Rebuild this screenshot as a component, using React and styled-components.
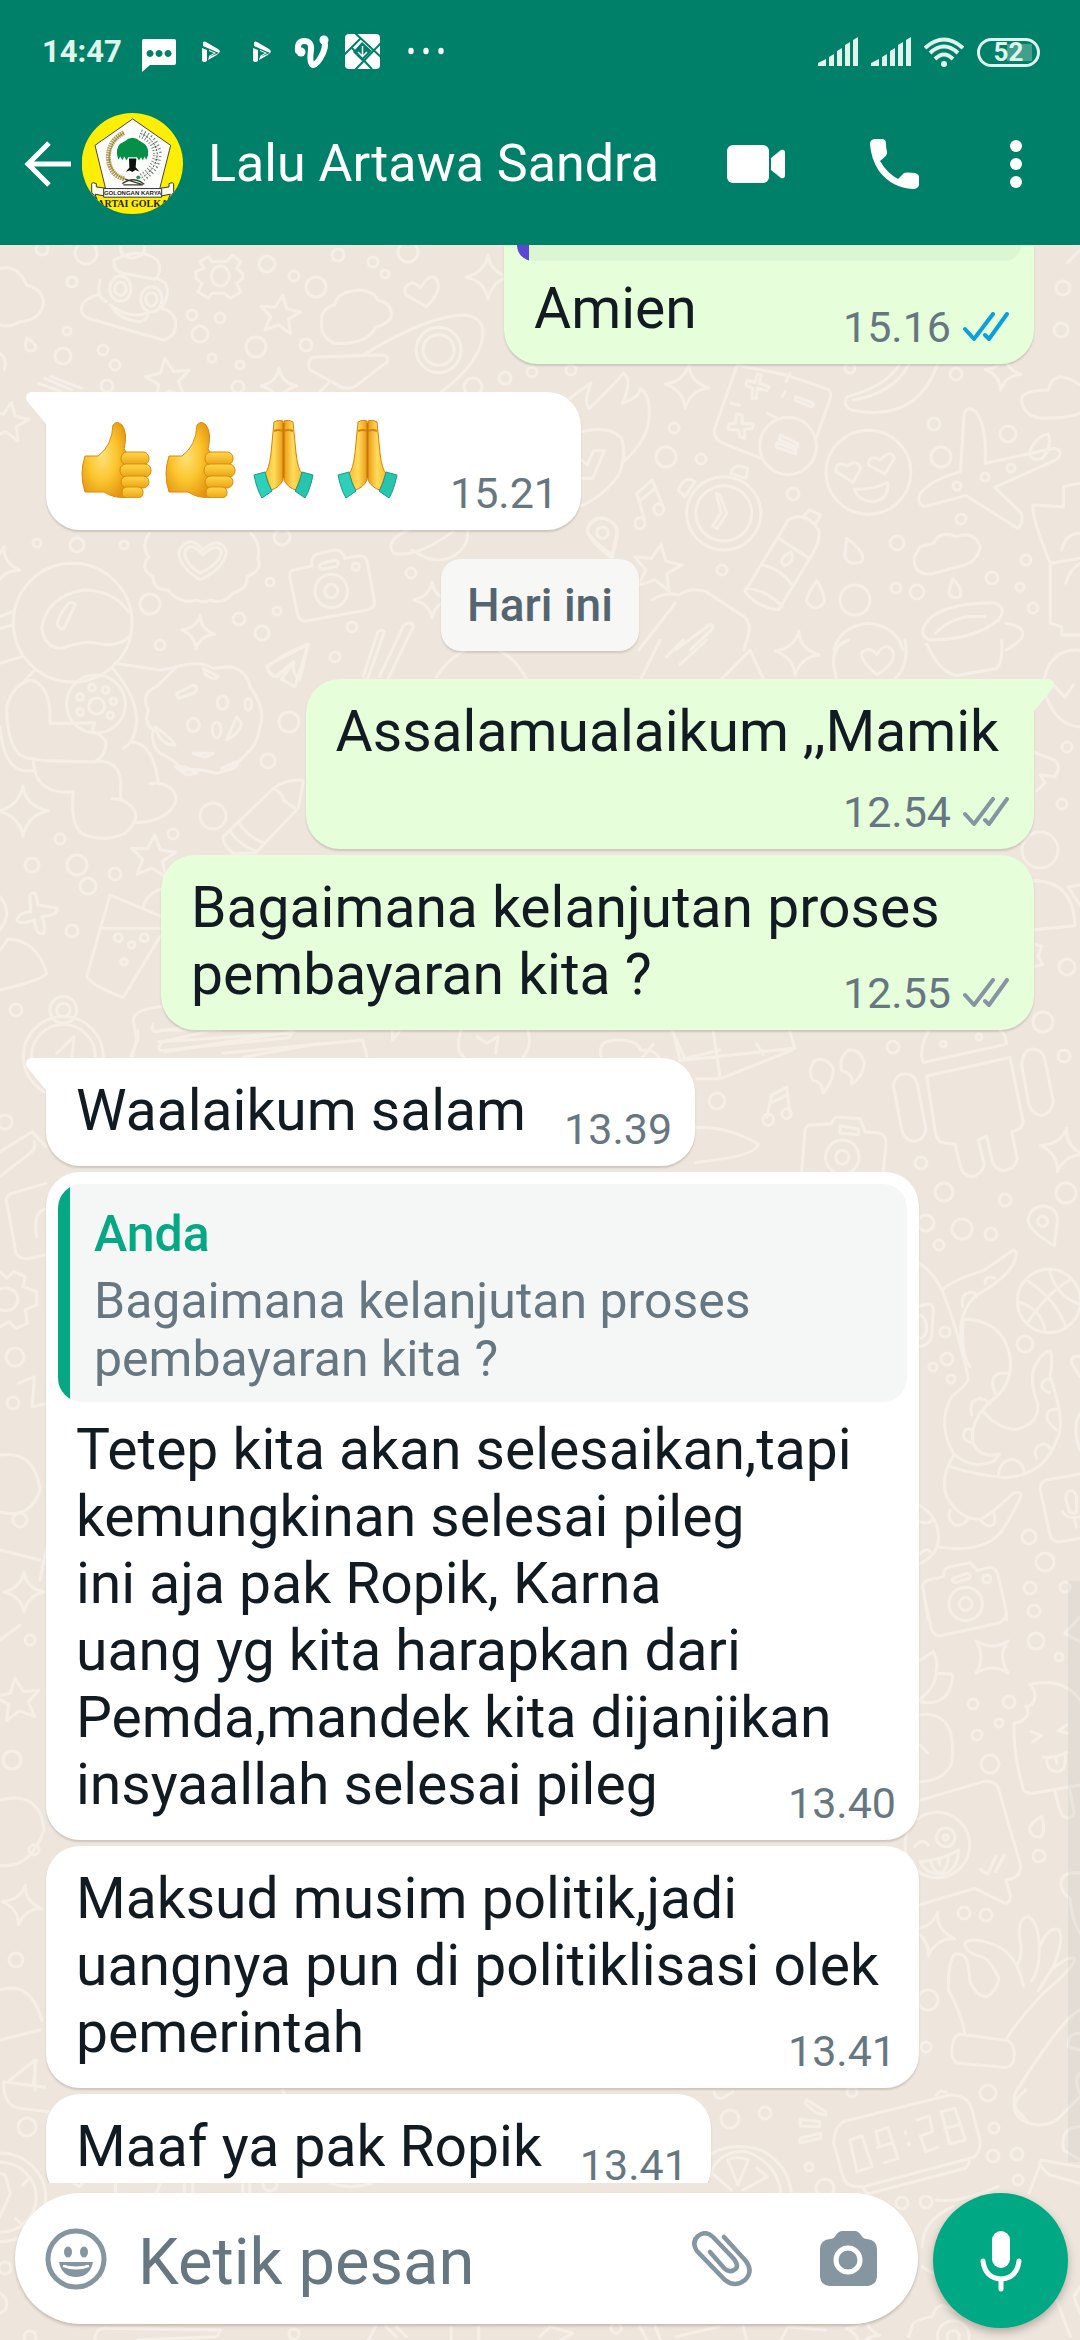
import React from 'react'
import styled, { createGlobalStyle } from 'styled-components'

const GlobalStyle = createGlobalStyle`
  * {
    box-sizing: border-box;
  }
  body {
    margin: 0;
    font-family: Roboto, 'Noto Sans', sans-serif;
    color: #111b21;
  }
  button {
    display: flex;
    padding: 0;
    border: 0;
    background: none;
    color: inherit;
  }
  svg {
    display: block;
    flex: none;
  }
`

const Screen = styled.div`
  position: relative;
  display: flex;
  flex-direction: column;
  height: 100vh;
  overflow: hidden;
  background-color: #eee6dd;
`

const Backdrop = styled.svg`
  position: absolute;
  inset: 0;
  width: 100%;
  height: 100%;
  fill: none;
  stroke: #f6efe8;
  stroke-width: 3;
  stroke-linecap: round;
  stroke-linejoin: round;
  path,
  ellipse {
    vector-effect: non-scaling-stroke;
  }
`

const Header = styled.header`
  position: relative;
  flex: none;
  background-color: #008069;
  color: #fff;
`

const StatusBar = styled.div`
  display: flex;
  align-items: center;
  justify-content: space-between;
  height: 104px;
  padding: 0 40px 0 42px;
  color: #e0f3ec;
`

const StatusGroup = styled.div`
  display: flex;
  align-items: center;
  gap: ${({ gap }) => gap}px;
`

const Clock = styled.time`
  font-size: 31px;
  font-weight: 700;
  line-height: 36px;
`

const Toolbar = styled.div`
  display: flex;
  align-items: center;
  height: 141px;
  padding: 0 52px 22px 24px;
`

const Contact = styled.h1`
  flex: 1;
  margin: 0 0 0 25px;
  font-size: 52px;
  font-weight: 400;
  line-height: 60px;
`

const BackButton = styled.button`
  margin-right: 10px;
`

const Actions = styled.div`
  display: flex;
  align-items: center;
  gap: 85px;
`

const Thread = styled.main`
  position: relative;
  flex: 1;
  min-height: 0;
  display: flex;
  flex-direction: column;
  padding: 0 46px;
  overflow: hidden;
`

const Scrollbar = styled.div`
  position: absolute;
  right: 0;
  bottom: 21px;
  width: 12px;
  height: 30%;
  background-color: rgba(60, 80, 90, 0.06);
`

const Bubble = styled.article`
  position: relative;
  flex: none;
  align-self: ${({ out }) => (out ? 'flex-end' : 'flex-start')};
  width: ${({ wide }) => (wide ? 'calc(100% - 115px)' : 'auto')};
  margin-top: ${({ first }) => (first ? 28 : 6)}px;
  border-radius: 34px;
  background-color: ${({ out }) => (out ? '#e6ffda' : '#fff')};
  box-shadow: 0 2px 2px rgba(40, 30, 20, 0.16);
  ${({ first, out }) =>
    first && (out ? 'border-top-right-radius: 0;' : 'border-top-left-radius: 0;')}
`

const ClippedBubble = styled(Bubble)`
  width: 530px;
  margin-top: 0;
  padding: 0 13px;
  border-radius: 0 0 34px 34px;
`

const QuotedBubble = styled(Bubble)`
  padding-top: 12px;
`

const Tail = styled.svg`
  position: absolute;
  top: 0;
  ${({ $out }) => ($out ? 'left: 100%;' : 'right: 100%;')}
  fill: ${({ $out }) => ($out ? '#e6ffda' : '#fff')};
`

const Body = styled.div`
  display: ${({ mode }) => (mode === 'inline' ? 'flex' : 'block')};
  align-items: flex-end;
  gap: 38px;
  padding: ${({ quoted }) => (quoted ? 14 : 19)}px ${({ out }) => (out ? 25 : 23)}px 12px 30px;
`

const ClippedBody = styled(Body)`
  padding: 14px 12px 12px 17px;
`

const Text = styled.p`
  display: flow-root;
  margin: 0;
  padding-bottom: ${({ mode }) => (mode === 'inline' ? 10 : 0)}px;
  padding-right: ${({ mode }) => (mode === 'below' ? 10 : 0)}px;
  font-size: 57px;
  line-height: 67px;
  white-space: pre-line;
`

const EmojiRow = styled.div`
  display: flex;
  padding: 9px 0 20px;
`

const Meta = styled.span`
  display: flex;
  align-items: center;
  justify-content: flex-end;
  gap: 12px;
  color: #667781;
  font-size: 43px;
  line-height: 50px;
  ${({ mode }) => mode === 'below' && 'margin-top: 22px;'}
  ${({ mode }) => !mode && 'float: right; margin-top: 27px;'}
`

const Quote = styled.blockquote`
  margin: 0 12px;
  padding: 21px 24px 14px 36px;
  border-radius: 24px;
  background: linear-gradient(90deg, #06a884 12px, #f4f7f6 12px);
  color: #667781;
  font-size: 50px;
  line-height: 58px;
`

const QuoteAuthor = styled.strong`
  display: block;
  margin-bottom: 9px;
  color: #06a884;
  font-weight: 500;
`

const QuoteText = styled.p`
  margin: 0;
  white-space: pre-line;
`

const QuoteEnd = styled.div`
  height: 16px;
  border-radius: 0 0 24px 24px;
  background: linear-gradient(90deg, #5b48d2 12px, #dcf5d2 12px);
`

const DateChip = styled.div`
  align-self: center;
  flex: none;
  margin-top: 29px;
  padding: 18px 26px;
  border-radius: 20px;
  background-color: #f7f7f6;
  box-shadow: 0 2px 2px rgba(40, 30, 20, 0.14);
  color: #54656f;
  font-size: 46px;
  font-weight: 500;
  line-height: 56px;
`

const Composer = styled.form`
  position: relative;
  flex: none;
  display: flex;
  gap: 15px;
  padding: 10px 12px 12px 15px;
`

const Field = styled.div`
  flex: 1;
  min-width: 0;
  display: flex;
  align-items: center;
  height: 131px;
  padding: 0 41px 0 30px;
  border-radius: 66px;
  background-color: #fff;
  box-shadow: 0 2px 3px rgba(40, 30, 20, 0.22);
  color: #8696a0;
`

const MessageInput = styled.input`
  flex: 1;
  min-width: 0;
  margin: 6px 0 0 31px;
  padding: 0;
  border: 0;
  outline: 0;
  background: none;
  color: #111b21;
  font: 400 65px/76px Roboto, 'Noto Sans', sans-serif;
  &::placeholder {
    color: #667781;
    opacity: 1;
  }
`

const AttachButton = styled.button`
  margin-right: 68px;
`

const MicButton = styled.button`
  align-items: center;
  justify-content: center;
  width: 135px;
  height: 135px;
  border-radius: 50%;
  background-color: #00a884;
  box-shadow: 0 4px 8px rgba(40, 30, 20, 0.3);
`

/* ---------- wallpaper ---------- */

const RINGS = [
  [72, 282, 5], [42, 249, 6], [86, 253, 11], [267, 264, 8], [294, 276, 5], [316, 287, 10],
  [338, 255, 6], [373, 262, 5], [385, 274, 4], [408, 252, 10], [192, 315, 5], [220, 318, 5],
  [200, 334, 8], [67, 331, 4], [63, 356, 8], [103, 350, 5], [115, 365, 5], [256, 347, 10],
  [306, 345, 6], [212, 358, 4], [240, 365, 4], [107, 386, 6], [238, 387, 6], [505, 378, 6],
  [473, 387, 9], [532, 372, 5], [571, 370, 5], [37, 543, 4], [77, 545, 7], [124, 545, 4],
  [282, 537, 8], [270, 582, 4], [277, 611, 4], [239, 619, 6], [262, 633, 7], [150, 604, 10],
  [160, 645, 5], [352, 627, 5], [335, 657, 5], [411, 573, 5], [674, 428, 5], [666, 457, 10],
  [701, 459, 5], [793, 494, 6], [722, 570, 5], [934, 424, 6], [941, 457, 10], [1008, 434, 8],
  [1011, 468, 4], [985, 477, 4], [957, 486, 4], [961, 519, 5], [897, 543, 7], [1026, 560, 5],
  [992, 578, 6], [896, 588, 5], [1020, 587, 4], [917, 592, 7], [1033, 608, 5], [1063, 288, 7],
  [1061, 330, 7], [850, 368, 5], [956, 374, 6], [855, 600, 15], [1067, 747, 5], [1062, 804, 5],
  [1040, 850, 18], [1067, 967, 8], [1043, 1022, 10], [1064, 1056, 6], [893, 1047, 6],
  [717, 1101, 8], [921, 1163, 6], [944, 1192, 9], [1005, 1200, 6], [1066, 1193, 10],
  [926, 1223, 8], [962, 1229, 10], [991, 1234, 6], [939, 1245, 5], [945, 1332, 5],
  [947, 1359, 6], [933, 1367, 4], [951, 1379, 4], [1025, 1344, 8], [1029, 1537, 7],
  [1045, 1562, 9], [1030, 1588, 6], [1034, 1611, 6], [1065, 1587, 5], [1036, 1641, 8],
  [1059, 1657, 4], [973, 1704, 5], [1009, 1702, 6], [999, 1723, 4], [977, 1735, 5],
  [990, 1764, 9], [1039, 1856, 6], [964, 1913, 6], [986, 1915, 6], [928, 2000, 10],
  [926, 2047, 5], [988, 2093, 8], [289, 722, 10], [268, 761, 7], [213, 816, 13],
  [173, 834, 5], [60, 839, 5], [32, 865, 7], [77, 865, 10], [115, 874, 6], [88, 886, 8],
  [72, 931, 6], [16, 1010, 6], [5, 1122, 7], [15, 1357, 9], [13, 1403, 6], [27, 2127, 9],
  [5, 2268, 6], [294, 2334, 5], [30, 2337, 6], [270, 2184, 7], [730, 2119, 9],
  [765, 2113, 6], [852, 2092, 5], [809, 2167, 4], [825, 2188, 9], [994, 2128, 5],
  [993, 2156, 6], [1017, 2154, 6], [1018, 2180, 5], [902, 2203, 6], [926, 2202, 6],
  [616, 2328, 5], [20, 1520, 7], [30, 1640, 5], [12, 1760, 9], [34, 1850, 5], [16, 1960, 7],
]

const SPARKLES = [
  [488, 277, 22, 0], [279, 386, 18, 0], [198, 632, 17, 8], [0, 566, 20, 12], [432, 600, 18, 0],
  [23, 811, 25, 0], [687, 386, 22, 5], [1003, 372, 18, 8], [797, 653, 22, 5],
  [1062, 1150, 22, 12], [992, 1657, 23, 45], [933, 1934, 22, 12], [863, 2332, 17, 12],
  [24, 1592, 20, 0], [22, 1905, 20, 10],
]

const STARS = [
  [280, 315, 20, 8], [168, 380, 22, -8], [8, 422, 20, 10], [657, 568, 24, 10],
  [153, 857, 22, 5], [18, 1700, 22, -8],
]

function Wallpaper() {
  return (
    <Backdrop viewBox="0 0 1080 2340" preserveAspectRatio="xMidYMin slice" aria-hidden="true">
      {RINGS.map(([x, y, r]) => (
        <ellipse key={`${x}-${y}`} cx={x} cy={y} rx={r} ry={r} />
      ))}
      {SPARKLES.map(([x, y, size, turn]) => (
        <path
          key={`${x}-${y}`}
          transform={`translate(${x} ${y}) rotate(${turn}) scale(${size / 20})`}
          d="M0-20Q2-4 20 0Q4 3 0 20Q-3 4-20 0Q-3-4 0-20Z"
        />
      ))}
      {STARS.map(([x, y, size, turn]) => (
        <path
          key={`${x}-${y}`}
          transform={`translate(${x} ${y}) rotate(${turn}) scale(${size / 20})`}
          d="M0-20 6-7 20-6 9 3 13 17 0 10-13 17-9 3-20-6-6-7Z"
        />
      ))}
      {/* top left: smiling swirl, gear, cloud, fried egg */}
      <g transform="translate(0 240) scale(.408 .3333)">
        <path d="M0 85Q45 75 65 135Q112 150 105 200Q95 240 50 245Q20 265 0 255" />
        <path d="M320 55Q365 50 352 0M320 55Q285 40 300 10M280 60Q275 90 300 100L380 118Q400 90 385 60Q340 20 280 60M245 120Q235 170 260 185L240 165Q195 180 200 215Q205 235 230 240L400 300Q435 290 430 240Q420 210 395 205Q420 160 405 130L385 115M270 195Q320 240 362 218Q365 235 345 245Q290 240 272 195Z" />
        <ellipse cx="295" cy="146" rx="26" ry="38" />
        <ellipse cx="295" cy="146" rx="14" ry="20" />
        <ellipse cx="371" cy="178" rx="26" ry="38" />
        <ellipse cx="371" cy="178" rx="14" ry="20" />
        <path d="M510 50 520 65H555L570 45 590 65 580 85 595 100V115L580 130 590 155 565 175 550 160H520L510 175 485 155 495 130 480 115V95L500 85 490 65Z" />
        <ellipse cx="540" cy="108" rx="22" ry="30" />
        <path d="M1010 128Q985 140 995 165L1045 200Q1080 160 1073 125Q1060 95 1038 130L1030 142Q1020 130 1010 128Z" />
        <path d="M820 195Q825 155 880 150Q920 155 925 180Q965 190 958 235Q935 260 920 262Q900 315 820 310Q785 290 788 250Q785 205 820 195Z" />
        <path d="M890 345Q1050 225 1140 225Q1190 235 1183 290Q1175 370 1080 458M765 352 930 345Q955 345 950 365L870 440Q850 450 835 440L760 390Q750 370 765 352ZM785 455 805 430" />
        <ellipse cx="1075" cy="330" rx="55" ry="68" />
        <ellipse cx="1075" cy="330" rx="38" ry="46" />
        <path d="M0 340Q20 360 10 390M65 293Q95 315 85 330Q65 340 62 318ZM95 430 150 455M110 415 175 450M125 410 200 445" />
        <path d="M365 880Q345 925 365 950Q340 985 375 1010Q375 1050 412 1050Q440 1095 480 1080Q500 1090 515 1080Q550 1095 570 1060Q610 1045 605 1010Q645 990 632 955Q640 910 615 880" />
        <path d="M490 1020Q430 970 440 930Q465 880 498 930Q540 885 555 935Q550 985 490 1020ZM490 1000Q445 960 455 930Q470 905 498 945Q530 905 543 935Q540 970 490 1000Z" />
        <path d="M720 990 765 978Q760 945 785 940L820 930Q840 930 845 955L880 948Q895 945 900 965L918 1085Q918 1105 900 1110L750 1143Q735 1145 730 1125L710 1010Q710 992 720 990ZM790 970 820 960Q835 965 825 980L790 988Q775 980 790 970Z" />
        <ellipse cx="812" cy="1053" rx="40" ry="50" />
        <ellipse cx="812" cy="1053" rx="16" ry="20" />
        <ellipse cx="872" cy="980" rx="9" ry="11" />
        <path d="M1000 870Q940 905 965 940Q1020 955 1110 875M1010 930Q1080 990 1130 930Q1150 905 1145 870M1500 945Q1440 890 1440 870Q1450 830 1480 835Q1520 850 1510 890Z" />
        <path d="M755 1212Q665 1260 655 1285Q660 1310 680 1310L720 1270Q715 1300 735 1318M755 1212 735 1318M890 1310 925 1180Q930 1165 942 1175L900 1320M930 1310 990 1155Q1010 1140 1013 1160L950 1320M1070 1310Q1120 1220 1190 1215Q1260 1240 1290 1318" />
      </g>
      {/* top right: flame, calculator, clock, face, plane */}
      <g transform="translate(480 230) scale(.3827 .3333)">
        <path d="M235 505 290 458Q270 520 285 535Q320 500 375 430Q400 450 372 520Q420 500 418 475Q450 500 440 580Q430 640 375 695M265 605Q340 585 370 625Q385 680 360 740Q320 800 265 828M265 690 280 705 297 662H325L295 745H265" />
        <path d="M672 405 612 600Q612 630 635 640L735 685M800 435 910 478Q920 490 915 505L880 620M672 405 800 435M800 455 810 430M790 500 797 485M752 550 775 565M656 520 678 525" />
        <path d="M735 435 730 460 755 470 750 482 725 475 722 505H710L712 475 695 465 698 450 718 458 725 432ZM685 555 685 580 715 582 712 595 690 598 692 625 680 622 675 600 648 598 650 582 668 580 670 552ZM825 500 868 518Q875 528 865 530L825 512ZM785 615 830 640V652L782 630ZM775 638 825 660V672L775 652Z" />
        <ellipse cx="805" cy="648" rx="74" ry="86" />
        <path d="M1095 405Q1060 470 960 500Q945 525 970 540Q1140 580 1195 405M1120 405Q1080 490 975 510M1568 465Q1500 410 1485 480Q1415 480 1415 510Q1420 560 1470 565Q1530 565 1568 550M1568 60 1535 98" />
        <ellipse cx="637" cy="850" rx="97" ry="110" />
        <ellipse cx="637" cy="850" rx="73" ry="83" />
        <path d="M617 790 627 795 645 850 620 895 608 888 630 848ZM655 730Q665 695 700 715L695 745ZM562 755Q535 735 518 780L535 800ZM410 790 450 750 480 835M410 790 430 870M415 815 458 775" />
        <ellipse cx="467" cy="838" rx="13" ry="17" />
        <ellipse cx="418" cy="880" rx="13" ry="17" />
        <ellipse cx="1015" cy="727" rx="111" ry="126" />
        <path d="M975 757 930 725Q930 690 960 708Q985 685 995 715ZM1058 732 1015 705Q1015 672 1045 690Q1075 655 1083 685ZM978 778Q1030 780 1065 757Q1070 805 1030 815Q990 815 978 778Z" />
        <path d="M1255 725 1265 550Q1275 525 1295 545Q1325 590 1320 700L1500 655Q1530 665 1505 690L1345 772 1415 850Q1420 880 1405 895L1270 797 1160 830Q1140 820 1150 790Q1180 750 1255 725ZM1435 670Q1450 620 1485 612Q1495 650 1470 685Q1440 695 1435 670Z" />
        <path d="M845 860 860 840 890 855 875 885M805 870Q850 840 885 900Q890 930 870 970L780 1140Q720 1130 692 1085L790 900ZM780 925 860 985M740 1005Q790 1020 815 1065M695 1075Q750 1080 790 1130M812 965Q825 995 795 1008Q775 990 812 965ZM958 925Q1010 970 998 995Q965 1010 953 980ZM880 1052Q905 1100 898 1120Q875 1150 853 1115Q855 1090 880 1052ZM1235 1047Q1262 1075 1255 1100Q1230 1110 1225 1085Z" />
        <path d="M1150 950 1185 940Q1200 900 1245 920Q1290 900 1307 950Q1300 1000 1250 1010L1180 1032Q1130 1035 1135 980ZM1568 760 1525 770V830L1445 825Q1440 860 1490 1000V1180L1520 1190V1215H1568M1490 1000 1568 985M1520 960Q1530 910 1568 910M1530 1060Q1540 1020 1568 1000" />
        <ellipse cx="320" cy="908" rx="15" ry="17" />
        <path d="M345 985Q280 925 280 900Q290 860 325 865Q365 880 358 920ZM450 1110Q480 1085 520 1095Q550 1070 590 1085L690 1160Q710 1180 700 1220L690 1260M415 1260 510 1120M595 1185Q615 1180 605 1200L550 1260M510 1260 600 1185M925 1260Q940 1190 1015 1180Q1090 1190 1105 1260M1165 1180Q1200 1120 1340 1118Q1380 1130 1355 1170Q1290 1230 1175 1230Q1145 1215 1165 1180ZM1190 1210Q1240 1150 1320 1160M1375 1180Q1430 1190 1415 1225Q1400 1245 1375 1260" />
      </g>
      {/* left: astronaut, cookie, crayon, compass */}
      <g transform="translate(0 560) scale(.3333)">
        <ellipse cx="218" cy="188" rx="178" ry="178" />
        <path d="M385 155Q340 90 250 90Q140 110 125 205Q135 265 185 265Q240 245 280 248Q350 265 385 232M225 135 195 200Q185 215 172 195Q170 175 205 130Q225 125 225 135ZM38 155 0 170M38 195 0 205M65 290 0 310M105 330 75 360M345 310 480 330 530 322M335 322Q420 420 408 500Q400 550 370 565M150 490Q155 380 95 360Q40 370 20 440Q20 540 55 580Q75 600 150 602L285 606Q320 585 318 545Q300 520 275 515L285 488 215 490 150 490M0 500Q10 620 70 632H100M100 605Q105 690 190 697L220 695Q210 790 245 820Q310 850 375 820Q430 770 390 735Q370 715 335 716M285 603Q355 600 362 660V715M395 545Q460 550 475 670Q530 680 528 725Q500 785 410 788M450 672 475 668" />
        <ellipse cx="288" cy="432" rx="88" ry="87" />
        <ellipse cx="290" cy="438" rx="24" ry="24" />
        <ellipse cx="276" cy="383" rx="10" ry="10" />
        <ellipse cx="317" cy="390" rx="10" ry="10" />
        <ellipse cx="340" cy="424" rx="10" ry="10" />
        <ellipse cx="331" cy="466" rx="10" ry="10" />
        <ellipse cx="240" cy="456" rx="10" ry="10" />
        <ellipse cx="240" cy="411" rx="10" ry="10" />
        <path d="M530 320Q600 300 640 325L690 320Q740 330 750 380Q800 450 780 500Q770 560 740 580Q700 630 650 640Q600 625 550 630Q510 590 480 580Q450 550 460 510Q430 490 445 450Q420 400 470 380ZM530 400 580 375Q600 385 580 400L535 415ZM610 325 655 350Q640 365 615 340ZM465 500Q520 540 525 555Q480 555 465 500ZM680 540Q720 520 725 490L710 470ZM580 580H640L615 592ZM555 620 590 640 560 645 525 620ZM665 625 710 605Q720 620 680 632Z" />
        <ellipse cx="668" cy="428" rx="16" ry="20" />
        <ellipse cx="580" cy="495" rx="18" ry="20" />
        <ellipse cx="650" cy="510" rx="13" ry="24" />
        <ellipse cx="745" cy="433" rx="10" ry="18" />
        <path d="M925 253Q810 310 800 320Q815 350 830 348L880 305 845 358 885 380ZM905 660Q850 660 820 685L670 830Q665 850 700 880H765L895 745 910 665ZM820 685Q850 700 850 720L885 745M715 785Q740 830 795 850M690 812Q710 850 770 875" />
        <path d="M90 1005Q110 985 113 1035Q150 1040 172 1045Q175 1065 125 1070Q140 1100 130 1120Q110 1130 103 1080Q60 1095 50 1080Q60 1055 92 1055ZM330 1005 260 1250Q280 1280 370 1312L480 1130M330 1005 480 1068M300 1105H480M430 1040Q440 1000 490 985M0 1170 25 1137Q110 1140 140 1240Q130 1260 0 1290M0 1010Q40 1060 0 1110" />
        <ellipse cx="355" cy="1133" rx="12" ry="12" />
        <ellipse cx="433" cy="1133" rx="12" ry="12" />
        <ellipse cx="395" cy="1155" rx="10" ry="10" />
        <ellipse cx="372" cy="1206" rx="10" ry="10" />
        <ellipse cx="190" cy="1490" rx="120" ry="120" />
        <ellipse cx="190" cy="1490" rx="96" ry="96" />
        <ellipse cx="190" cy="1350" rx="40" ry="40" />
        <ellipse cx="190" cy="1350" rx="20" ry="20" />
        <path d="M170 1480 222 1430 215 1500M480 1340Q400 1350 400 1380L410 1440 395 1495M460 1392Q450 1415 470 1415L560 1400M480 1340 560 1340M870 1415Q880 1435 850 1435L480 1472Q470 1460 490 1445L620 1415M730 1492 960 1450" />
      </g>
      {/* right edge: mug, robot, note */}
      <g transform="translate(640 640) scale(.3333 .4082)">
        <path d="M0 100 60 0M80 40 130 0M120 60 200 0M245 95 330 25 370 95M590 95Q560 20 625 0M765 95Q810 60 795 0M710 85Q660 50 665 30Q690 15 710 35Q740 0 760 30Q765 60 710 85ZM860 10Q900 80 950 87L1070 70Q1090 50 1085 0M1320 25Q1220 20 1210 115Q1240 210 1320 213M1240 110 1275 140 1300 110M1182 275 1245 295Q1265 310 1245 335L1200 330 1215 350 1190 370M1182 590Q1300 590 1305 700L1182 710M1320 600 1285 605 1320 650M1182 745 1205 750 1195 775 1208 795 1182 800" />
        <path d="M100 960 120 1030 465 1000 450 960M220 960 240 1070M350 990 370 1015M0 1030 40 990M170 1075 240 1075 455 1005M550 1110Q580 1080 580 1050Q560 1020 525 1030Q500 1055 520 1080Q545 1080 550 1110ZM635 1088Q670 1070 673 1035Q660 1000 625 1005Q595 1025 605 1055Q640 1060 635 1088ZM380 1170 395 1115 440 1095 450 1160M390 1135 440 1115" />
        <ellipse cx="385" cy="1175" rx="16" ry="14" />
        <ellipse cx="440" cy="1160" rx="14" ry="12" />
        <path d="M845 1020 850 1035 1100 990Q1095 960 1080 958M845 1020Q845 985 865 960M760 1090Q770 1060 800 1063Q830 1065 835 1100L858 1200Q850 1225 825 1228Q795 1228 785 1200ZM1145 1040Q1150 1000 1180 1002Q1210 1005 1215 1030L1240 1130Q1235 1160 1205 1165Q1170 1160 1165 1130ZM860 1068 1110 1023 1150 1180Q1145 1200 1115 1205L1132 1270Q1125 1298 1090 1300Q1060 1295 1055 1270L1040 1215 1015 1225 1033 1285Q1025 1310 995 1315Q965 1310 960 1285L945 1235 910 1232Q890 1230 885 1200Z" />
        <path d="M485 1300 495 1200Q500 1185 520 1188L575 1185Q580 1165 600 1170L660 1172 675 1205 720 1208Q740 1215 738 1235L730 1300M165 1195Q260 1190 355 1235Q350 1265 165 1280M600 1190 655 1198V1212L600 1208Z" />
        <ellipse cx="607" cy="1267" rx="50" ry="42" />
        <ellipse cx="607" cy="1267" rx="20" ry="17" />
        <ellipse cx="910" cy="990" rx="9" ry="7" />
        <ellipse cx="1017" cy="972" rx="9" ry="7" />
      </g>
      {/* right: pin, ball, octopus arms, camera */}
      <g transform="translate(880 1100) scale(.3333)">
        <path d="M523 437Q440 390 445 355Q455 318 490 318Q535 325 532 365Z" />
        <ellipse cx="488" cy="364" rx="15" ry="15" />
        <ellipse cx="507" cy="603" rx="95" ry="95" />
        <path d="M440 540Q530 600 557 680M415 605Q490 630 495 695M510 515Q530 590 598 612M570 540Q500 580 445 665" />
        <path d="M117 490Q165 520 190 580Q240 710 265 835Q265 850 215 890Q170 970 220 1060Q270 1110 340 1085L358 1063Q300 1075 280 1030Q265 970 330 905Q400 860 390 770Q370 660 250 657Q240 760 270 800M190 567Q220 540 310 512L400 450Q420 455 395 500Q370 540 290 585Q230 640 245 730M310 935Q360 990 410 988Q480 970 473 910Q450 850 460 810Q480 760 510 752Q520 770 510 830Q560 970 530 1020Q490 1130 370 1133Q290 1125 210 1100M220 1068Q180 1130 200 1190Q240 1260 300 1258Q330 1245 400 1180Q430 1170 420 1195Q380 1280 350 1310Q290 1360 170 1340M117 1215Q180 1250 175 1320Q170 1370 117 1392M117 1265Q150 1275 155 1260M117 1365Q140 1340 150 1355M117 620Q160 600 160 630L155 710Q150 735 117 740M117 645Q140 650 140 690 135 715 117 715" />
        <path d="M248 620Q240 580 275 577 290 580 290 590M315 550Q315 525 345 535M345 880Q325 830 360 820L385 820M275 945Q265 900 300 895 320 900 330 912M275 1028Q240 1020 255 990 265 985 275 990M355 1125Q360 1080 400 1078 430 1090 433 1115M470 1075Q455 1040 490 1032 505 1035 510 1045M530 990Q490 960 505 935 520 925 535 928M508 878Q475 865 490 845 500 835 510 838M210 1230Q200 1260 225 1275 250 1280 265 1255M300 1258Q320 1285 340 1275 350 1260 340 1235" />
        <path d="M600 770Q570 765 575 790L600 830M600 940Q575 980 600 1050M600 1122 500 1140Q475 1150 482 1175L510 1305Q520 1330 545 1325L600 1315M572 1172Q555 1175 558 1200L568 1235Q580 1245 590 1235V1190Q585 1172 572 1172ZM547 1235Q560 1260 600 1250M582 1255 590 1282" />
        <path d="M145 1560 128 1460Q128 1445 145 1440L190 1430Q190 1405 205 1402L270 1388 292 1412 330 1402Q350 1405 355 1430L378 1530 380 1560M220 1435 262 1420Q275 1425 268 1435L225 1448Q212 1442 220 1435Z" />
        <ellipse cx="257" cy="1512" rx="50" ry="50" />
        <ellipse cx="257" cy="1512" rx="19" ry="19" />
        <ellipse cx="320" cy="1437" rx="12" ry="12" />
      </g>
      {/* right: popsicle, chat card, hand */}
      <g transform="translate(880 1600) scale(.3333)">
        <path d="M135 0 155 90Q165 108 180 107L355 70Q378 60 378 40M117 183 160 155Q175 180 168 220L215 222Q225 235 200 285Q165 320 117 303M168 222Q165 265 117 300M117 345Q160 335 195 365Q225 400 215 490Q190 545 117 545M120 435 142 458" />
        <path d="M450 253Q550 230 600 300M450 253Q475 285 460 305Q455 320 438 318Q450 340 435 355Q420 370 402 368Q400 430 415 510L430 570Q442 582 460 580L600 555M525 575Q540 640 550 650Q575 660 583 640L570 570M453 395 485 407 458 425M560 375 535 393 562 400M490 472Q530 475 560 457M500 473Q500 515 535 515 560 510 555 465M528 472 530 490M555 100 600 50M555 100 600 125" />
        <path d="M117 602 310 545Q345 540 355 565L423 800Q420 835 378 840L392 890Q390 910 375 910L285 865 117 915M300 807 323 823 347 770M347 815 373 765M105 740Q125 710 145 735M120 785Q190 780 235 750Q235 800 200 820Q140 830 120 785ZM152 780Q160 820 185 820 205 800 205 768M175 775 180 795M485 650Q500 700 478 712 450 710 448 685Q455 665 485 650ZM600 820Q550 810 542 850Q545 880 570 895Q575 960 600 1000" />
        <ellipse cx="172" cy="735" rx="97" ry="98" />
        <ellipse cx="197" cy="712" rx="28" ry="28" />
        <ellipse cx="197" cy="712" rx="8" ry="8" />
        <path d="M255 1305Q245 1240 205 1170Q205 1080 225 1062Q260 1055 265 1100L270 1145Q290 1190 320 1190Q350 1175 357 1135Q330 1080 310 1072Q255 1060 255 1030Q265 1015 300 1022Q410 1040 430 1158M412 1095Q430 1060 420 1020Q410 955 445 950Q475 965 478 1040Q480 1110 455 1143M478 1045Q500 985 530 987Q560 1000 520 1100L475 1172M520 1105Q560 1070 582 1075Q595 1090 490 1180 430 1240 380 1315M235 1302 385 1322Q410 1340 400 1385Q390 1405 370 1402L235 1390Q215 1385 215 1350Q220 1310 235 1302Z" />
        <path d="M600 1230Q550 1250 405 1480Q395 1520 420 1540L440 1560M600 1300Q560 1300 565 1340L600 1350M600 1420Q580 1440 600 1480" />
      </g>
      {/* left column */}
      <g transform="translate(0 1020) scale(.459 .3333)">
        <path d="M100 380 70 335 0 395M75 365Q80 385 65 400L0 470M100 490 25 520Q10 530 15 550L35 700Q45 720 65 715L100 705M100 565Q70 580 80 650M0 755 15 775 30 755 55 770 50 800 80 815V855L55 870 60 910 35 925 20 905 0 920M40 1090 75 1070 70 1160 110 1150" />
        <ellipse cx="12" cy="838" rx="27" ry="34" />
        <path d="M300 30V60L285 110M350 30H480M345 65 630 40M360 95 640 35M485 100 790 60 800 110M855 30V60L870 35M1005 30Q990 90 1010 110M1150 30Q1160 80 1140 110M1040 50 1060 70 1085 50 1080 100M1310 110Q1300 60 1345 60 1390 60 1395 90 1430 90 1435 112M1465 35 1490 110M1480 120 1568 90" />
      </g>
      <path d="M0 1455Q35 1450 40 1490Q30 1520 0 1512M0 1550 40 1560M0 1800Q40 1790 44 1830Q30 1870 0 1865M0 1990Q30 1980 42 2020M0 2040 40 2030M10 2080 35 2060V2090M48 1540 40 1580M0 1640 20 1625" />
      {/* bottom: digital clock, fruit slice, pens */}
      <g transform="translate(540 2060) scale(.3444 .3333)">
        <path d="M880 185 1190 105Q1235 105 1250 135L1278 240Q1280 285 1250 295L940 380Q890 385 880 350L853 250Q853 205 880 185ZM1150 105 1165 92 1180 97M940 385 950 402 1235 325Q1250 310 1245 295" />
        <path d="M900 240 935 228 965 320 920 335ZM975 215 1010 203 1040 295 1000 308M980 262 1020 250M975 215 985 258M1095 180 1130 168 1140 215 1105 228 1120 275 1155 262M1165 155 1205 145 1235 240 1190 252ZM1175 205 1215 195M1060 215 1062 220M1070 250 1072 254M775 120 830 155V165L800 158 770 130ZM755 178 812 185V200L755 198ZM755 235 815 220V235L755 248ZM505 95Q510 118 530 115L560 95" />
        <path d="M500 280Q560 245 640 270Q720 310 730 400M490 360Q510 270 600 275Q690 310 700 400M545 300Q570 285 605 300L575 375ZM630 325 660 350 590 390M500 340 555 390M1410 90Q1350 140 1400 180Q1450 210 1500 180L1568 110M1568 200Q1510 200 1520 270L1568 300M1455 300Q1440 310 1480 345L1568 370M1455 300 1568 320M1450 320 1420 400M1150 420Q1220 430 1330 380M1110 560Q1110 480 1200 440M1110 620 1140 640M1070 830 1080 800Q1080 780 1140 770Q1145 740 1170 735L1220 760M1540 830 1500 720M1568 680 1550 710 1568 760" />
        <ellipse cx="1200" cy="830" rx="46" ry="48" />
        <ellipse cx="1200" cy="830" rx="18" ry="18" />
        <path d="M0 830 30 800 95 820 60 840M290 800 310 840M335 800 350 840M395 830 520 800M590 800 600 840M700 840 720 800 830 810" />
      </g>
      <g transform="translate(0 2060) scale(.3444 .3333)">
        <path d="M10 65 130 82M10 65Q10 140 60 145L140 155M105 0 97 70M215 370 230 380 240 370M335 400V370M455 400 465 370M535 400V370M560 400V370M705 400V370M725 400V370M820 90 825 100M960 370Q1020 390 1080 370M275 840Q280 800 310 805L640 810 630 830 400 840M1070 840 1090 800M1120 800 1150 830M1150 800 1180 830M1310 800V840M1390 800V840" />
        <ellipse cx="0" cy="412" rx="133" ry="133" />
        <ellipse cx="0" cy="412" rx="105" ry="105" />
        <path d="M0 340 15 345 30 400 0 470M65 375 85 355M45 475 65 495M0 700Q30 720 15 750L0 760" />
      </g>
    </Backdrop>
  )
}

/* ---------- icons ---------- */

function Emblem() {
  return (
    <svg width="101" height="101" viewBox="21 22 303 306" preserveAspectRatio="none" role="img" aria-label="Foto profil">
      <defs>
        <clipPath id="round">
          <ellipse cx="172" cy="175" rx="152" ry="153" />
        </clipPath>
      </defs>
      <g clipPath="url(#round)">
        <path fill="#fcee04" d="M0 0h360v360H0z" />
        <path d="M173 40 287 120 254 252H92L60 120Z" fill="#fdfdfb" stroke="#4a4630" strokeWidth="3" />
        <path d="M147 82Q100 105 100 158Q104 212 150 222" fill="none" stroke="#b5a35a" strokeWidth="15" strokeDasharray="5 2" />
        <path d="M147 82Q105 105 102 158Q106 208 150 222" fill="none" stroke="#7c6a26" strokeWidth="2" />
        <path d="M196 84Q240 100 247 145Q245 190 200 218" fill="none" stroke="#6f7d76" strokeWidth="26" strokeDasharray="3 7" />
        <path d="M196 84Q240 100 247 145Q245 190 200 218" fill="none" stroke="#f2f5f0" strokeWidth="13" strokeDasharray="8 5" />
        <path d="M196 84Q240 100 247 145Q245 190 200 218" fill="none" stroke="#3d4d46" strokeWidth="3" strokeDasharray="6 4" />
        <path d="M126 148Q122 118 148 108Q172 86 197 108Q224 120 219 150L214 164 208 154 204 166 198 156 192 166 186 156H160L154 166 148 154 142 165 136 154 130 164Z" fill="#058f48" />
        <path d="M162 160H184L182 186 193 199 181 195 172 201 164 196 152 200 163 188Z" fill="#111" />
        <path d="M142 236Q170 216 196 230L208 238M150 222 200 238M145 240H204" fill="none" stroke="#3c3c30" strokeWidth="4" />
        <circle cx="190" cy="217" r="6" fill="#2c8f62" />
        <path d="M50 236Q52 230 64 236V246L92 250V274L60 268 66 284 50 262ZM296 236Q294 230 282 236V246L256 250V274L286 268 280 284 296 262Z" fill="#fffdf0" stroke="#333" strokeWidth="3" />
        <path d="M86 251H260V277H86Z" fill="#fff" stroke="#333" strokeWidth="3" />
        <text x="173" y="269" textAnchor="middle" fontFamily="Liberation Sans, sans-serif" fontWeight="700" fontSize="18" fill="#1d1d1d">GOLONGAN KARYA</text>
        <text x="176" y="307" textAnchor="middle" fontFamily="Liberation Serif, serif" fontWeight="700" fontSize="30" fill="#2a260c">PARTAI GOLKAR</text>
      </g>
    </svg>
  )
}

function StatusIcons() {
  return (
    <svg width="306" height="40" viewBox="140 32 306 40" fill="#fff" aria-hidden="true">
      <path fillRule="evenodd" d="M144 39H174Q176 39 176 41V63Q176 65 174 65H150L142 72V41Q142 39 144 39ZM150 50a3.500 3.500 0 1 0 .1 0ZM159 50a3.500 3.500 0 1 0 .1 0ZM168 50a3.500 3.500 0 1 0 .1 0Z" />
      {[202, 253].map(x => (
        <g key={x} transform={`translate(${x} 41)`}>
          <path d="M1 1Q2 0 4 1L16 8Q19 10 17 12L1 5ZM0 7 5 9V20L3 21Q0 21 0 19ZM7 16 17 12Q17 13 6 19ZM7 9 14 12 7 16Z" />
          <path d="M7 10V15L12 12Z" fill="#008069" />
        </g>
      ))}
      <path d="M298 51Q297 41 304 41Q312 41 311 50Q309 64 313 65Q318 64 323 53Q327 44 323 39" fill="none" stroke="#fff" strokeWidth="6" strokeLinecap="round" />
      <circle cx="301" cy="52" r="4.500" />
      <circle cx="324" cy="40" r="4.500" />
      <rect x="345" y="34" width="35" height="35" rx="4" />
      <path d="M355 33 382 58M381 43 355 70M344 55 361 38M351 47 372 69" stroke="#008069" strokeWidth="2" />
      <path d="M362 42 372 51 362 61 353 52Z" fill="#008069" />
      <path d="M362.500 46V56M358 52 362.500 56.500 367 52" fill="none" stroke="#fff" strokeWidth="1.500" />
      <ellipse cx="411" cy="51" rx="2.700" ry="3.200" />
      <ellipse cx="426" cy="51" rx="2.700" ry="3.200" />
      <ellipse cx="441" cy="51" rx="2.700" ry="3.200" />
    </svg>
  )
}

function SignalIcon() {
  return (
    <svg width="40" height="30" viewBox="0 0 40 30" fill="currentColor" aria-hidden="true">
      <path d="M0 26 8 22V29H0ZM11 20 16 17V29H11ZM19 14 24 11V29H19ZM27 8 32 5V29H27ZM35 3 40 0V29H35Z" />
    </svg>
  )
}

function WifiIcon() {
  return (
    <svg width="40" height="30" viewBox="0 0 40 30" fill="none" stroke="currentColor" strokeWidth="4" aria-hidden="true">
      <path d="M1 11Q20-6 39 11M6 16Q20 3 34 16M11 22Q20 13 29 22" />
      <circle cx="20" cy="27" r="3" fill="currentColor" stroke="none" />
    </svg>
  )
}

const Battery = styled.div`
  display: flex;
  align-items: center;
  justify-content: center;
  width: 63px;
  height: 29px;
  border: 3px solid #e0f3ec;
  border-radius: 15px;
  background: linear-gradient(90deg, transparent 46%, #409f8e 46%) center / 47px 17px no-repeat;
  font-size: 26px;
  font-weight: 700;
  line-height: 28px;
`

function CheckIcon({ read }) {
  return (
    <svg width="46" height="30" viewBox="0 0 46 30" fill="none" stroke={read ? '#0a9fdd' : '#8696a0'} strokeWidth="4" strokeLinecap="round" strokeLinejoin="round" aria-label={read ? 'Dibaca' : 'Terkirim'} role="img">
      <path d="M2 17 11 27 30 2M22 23 26 27 44 2" />
    </svg>
  )
}

function ThumbEmoji() {
  return (
    <svg width="84" height="78" viewBox="0 0 84 78" role="img" aria-label="👍">
      <defs>
        <radialGradient id="skin" cx=".45" cy=".45" r=".65">
          <stop offset="0" stopColor="#ffe07a" />
          <stop offset=".5" stopColor="#fbc62e" />
          <stop offset="1" stopColor="#e3920f" />
        </radialGradient>
        <linearGradient id="finger" x1="0" y1="0" x2="0" y2="1">
          <stop offset="0" stopColor="#ffd94a" />
          <stop offset="1" stopColor="#eda217" />
        </linearGradient>
      </defs>
      <g transform="translate(5 2)" stroke="#d98a0c">
        <path d="M4 34 17 34Q31 24 32 3Q36-2 41 3Q47 11 43 27L46 31V75Q34 77 23 70L4 70Q-2 52 4 34Z" fill="url(#skin)" />
        <rect x="40" y="30" width="28" height="13" rx="6" fill="url(#finger)" />
        <rect x="39" y="42" width="31" height="13" rx="6" fill="url(#finger)" />
        <rect x="40" y="54" width="28" height="12" rx="6" fill="url(#finger)" />
        <rect x="41" y="65" width="21" height="11" rx="5" fill="url(#finger)" />
      </g>
    </svg>
  )
}

function PrayEmoji() {
  return (
    <svg width="84" height="78" viewBox="0 0 84 78" role="img" aria-label="🙏">
      <defs>
        <linearGradient id="palm" x1="0" y1="0" x2="1" y2="0">
          <stop offset="0" stopColor="#f9bb2c" />
          <stop offset=".5" stopColor="#ffdc5c" />
          <stop offset="1" stopColor="#eb9c16" />
        </linearGradient>
      </defs>
      <g transform="translate(10 0)">
        {[0, 1].map(side => (
          <g key={side} transform={side ? 'translate(59 0) scale(-1 1)' : undefined}>
            <path d="M20 2Q24-1 29 1V60Q25 68 17 70L11 53Q15 50 17 33Z" fill="url(#palm)" stroke="#d4830b" />
            <path d="M20 11Q25 9 29 11" fill="none" stroke="#d4830b" strokeWidth="2" />
            <path d="M0 55 11 52Q13 63 18 71L8 78Q3 70 0 55Z" fill={side ? '#27c4ae' : '#2fd0ba'} stroke="#159c8b" />
          </g>
        ))}
        <path d="M29.500 3V58" stroke="#c87508" strokeWidth="1.500" />
      </g>
    </svg>
  )
}

/* ---------- messages ---------- */

const MESSAGES = [
  { text: 'Assalamualaikum ,,Mamik', time: '12.54', out: true, first: true, mode: 'below' },
  { text: 'Bagaimana kelanjutan proses pembayaran kita ?', time: '12.55', out: true, wide: true },
  { text: 'Waalaikum salam', time: '13.39', first: true, mode: 'inline' },
  {
    text: 'Tetep kita akan selesaikan,tapi\nkemungkinan selesai pileg\nini aja pak Ropik, Karna\nuang yg kita harapkan dari\nPemda,mandek kita dijanjikan\ninsyaallah selesai pileg',
    time: '13.40',
    wide: true,
    quote: { author: 'Anda', text: 'Bagaimana kelanjutan proses\npembayaran kita ?' },
  },
  {
    text: 'Maksud musim politik,jadi\nuangnya pun di politiklisasi olek\npemerintah',
    time: '13.41',
    wide: true,
  },
  { text: 'Maaf ya pak Ropik', time: '13.41', mode: 'inline' },
]

function BubbleTail({ out }) {
  return (
    <Tail $out={out} width="20" height="32" viewBox="0 0 20 32" aria-hidden="true">
      <path d={out ? 'M0 0H15Q22 2 19 9L0 32Z' : 'M20 0H5Q-2 2 1 9L20 32Z'} />
    </Tail>
  )
}

function Message({ message }) {
  const { text, time, out, first, wide, quote, mode } = message
  const Wrap = quote ? QuotedBubble : Bubble
  const meta = (
    <Meta mode={mode}>
      <time>{time}</time>
      {out && <CheckIcon />}
    </Meta>
  )

  return (
    <Wrap out={out ? 1 : undefined} first={first ? 1 : undefined} wide={wide ? 1 : undefined}>
      {first && <BubbleTail out={out} />}
      {quote && (
        <Quote>
          <QuoteAuthor>{quote.author}</QuoteAuthor>
          <QuoteText>{quote.text}</QuoteText>
        </Quote>
      )}
      <Body mode={mode} out={out ? 1 : undefined} quoted={quote ? 1 : undefined}>
        <Text mode={mode}>
          {text}
          {!mode && meta}
        </Text>
        {mode && meta}
      </Body>
    </Wrap>
  )
}

function App() {
  return (
    <Screen>
      <GlobalStyle />
      <Wallpaper />
      <Header>
        <StatusBar>
          <StatusGroup gap={18}>
            <Clock>14:47</Clock>
            <StatusIcons />
          </StatusGroup>
          <StatusGroup gap={13}>
            <SignalIcon />
            <SignalIcon />
            <WifiIcon />
            <Battery>52</Battery>
          </StatusGroup>
        </StatusBar>
        <Toolbar>
          <BackButton type="button" aria-label="Kembali">
            <svg width="48" height="48" viewBox="0 0 48 48" fill="none" stroke="#fff" strokeWidth="5">
              <path d="M25 3 4 24 25 45M4 24H47" />
            </svg>
          </BackButton>
          <Emblem />
          <Contact>Lalu Artawa Sandra</Contact>
          <Actions>
            <button type="button" aria-label="Panggilan video">
              <svg width="58" height="40" viewBox="0 0 58 40" fill="#fff">
                <rect x="0" y="1" width="42" height="38" rx="6" />
                <path d="M44 14 54 6Q58 5 58 9V31Q58 35 54 34L44 26Z" />
              </svg>
            </button>
            <button type="button" aria-label="Panggilan suara">
              <svg width="49" height="50" viewBox="0 0 49 50" fill="#fff">
                <path d="M4 0H12Q16 0 16 5Q16 9 17 13Q18 16 10 22Q17 34 28 40L34 34Q36 33 45 34Q49 35 49 38V46Q48 50 43 50Q22 49 9 32Q1 20 0 5Q0 1 4 0Z" />
              </svg>
            </button>
            <button type="button" aria-label="Opsi lainnya">
              <svg width="24" height="48" viewBox="0 0 24 48" fill="#fff">
                <circle cx="12" cy="6" r="6" />
                <circle cx="12" cy="24" r="6" />
                <circle cx="12" cy="42" r="6" />
              </svg>
            </button>
          </Actions>
        </Toolbar>
      </Header>
      <Thread>
        <ClippedBubble out={1}>
          <QuoteEnd />
          <ClippedBody>
            <Text>
              Amien
              <Meta>
                <time>15.16</time>
                <CheckIcon read />
              </Meta>
            </Text>
          </ClippedBody>
        </ClippedBubble>
        <Bubble first={1}>
          <BubbleTail />
          <Body mode="inline">
            <EmojiRow>
              <ThumbEmoji />
              <ThumbEmoji />
              <PrayEmoji />
              <PrayEmoji />
            </EmojiRow>
            <Meta mode="inline">
              <time>15.21</time>
            </Meta>
          </Body>
        </Bubble>
        <DateChip>Hari ini</DateChip>
        {MESSAGES.map(message => (
          <Message key={message.text} message={message} />
        ))}
        <Scrollbar />
      </Thread>
      <Composer onSubmit={event => event.preventDefault()}>
        <Field>
          <button type="button" aria-label="Emoji">
            <svg width="62" height="62" viewBox="0 0 62 62" fill="none" stroke="currentColor" strokeWidth="5">
              <circle cx="31" cy="31" r="28" />
              <ellipse cx="23" cy="24" rx="4" ry="5.500" fill="currentColor" stroke="none" />
              <ellipse cx="39" cy="24" rx="4" ry="5.500" fill="currentColor" stroke="none" />
              <path d="M14 34H48Q45 49 31 49Q17 49 14 34Z" fill="currentColor" stroke="none" />
              <path d="M18 38Q31 41 44 38Q31 43 18 38Z" fill="#fff" stroke="#fff" strokeWidth="2" />
            </svg>
          </button>
          <MessageInput type="text" placeholder="Ketik pesan" aria-label="Ketik pesan" />
          <AttachButton type="button" aria-label="Lampirkan">
            <svg width="60" height="56" viewBox="0 0 60 56" fill="none" stroke="currentColor" strokeWidth="4.500" strokeLinecap="round">
              <path d="M32 6 53 29Q62 40 53 49Q43 57 33 49L5 20Q-1 11 6 5Q14-1 21 6L42 28Q48 36 42 39Q37 42 32 37L18 21" />
            </svg>
          </AttachButton>
          <button type="button" aria-label="Kamera">
            <svg width="57" height="55" viewBox="0 0 57 55" fill="currentColor">
              <path d="M22 0H35Q38 0 41 4Q43 8 47 8Q57 9 57 18V46Q56 54 48 55H9Q1 54 0 46V18Q0 9 10 8Q14 8 16 4Q19 0 22 0Z" />
              <circle cx="28" cy="29" r="12" stroke="#fff" strokeWidth="5" />
            </svg>
          </button>
        </Field>
        <MicButton type="button" aria-label="Pesan suara">
          <svg width="44" height="62" viewBox="0 0 44 62" fill="none" stroke="#fff" strokeWidth="5" strokeLinecap="round">
            <rect x="13" y="1" width="18" height="37" rx="9" fill="#fff" stroke="none" />
            <path d="M4 31Q6 48 22 49Q38 48 40 31M22 49V59" />
          </svg>
        </MicButton>
      </Composer>
    </Screen>
  )
}

export default App
